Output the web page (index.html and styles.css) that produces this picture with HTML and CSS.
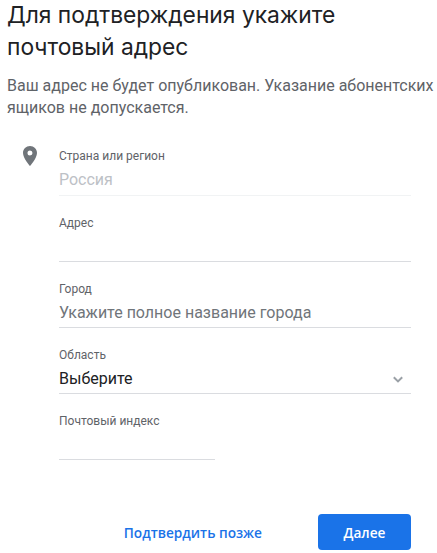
FILE: index.html
```html
<!DOCTYPE html>
<html lang="ru">

<head>
    <meta charset="UTF-8">
    <title>Подтверждение адреса</title>
    <link rel="stylesheet" href="styles.css">
</head>

<body>
    <h1 class="title"><span>Для подтверждения укажите</span> <span>почтовый адрес</span></h1>
    <p class="note">Ваш адрес не будет опубликован. Указание абонентских ящиков не допускается.</p>

    <div class="form">
        <svg class="pin" width="24" height="24" viewBox="0 0 24 24">
            <path fill="#70757a" fill-rule="evenodd" d="M12 2C8.13 2 5 5.13 5 9c0 5.25 7 13 7 13s7-7.75 7-13c0-3.87-3.13-7-7-7zm0 9.5a2.5 2.5 0 1 1 0-5 2.5 2.5 0 0 1 0 5z"/>
        </svg>

        <div class="fields">
            <div class="field field-disabled">
                <label>Страна или регион</label>
                <div class="value">Россия</div>
            </div>
            <div class="field">
                <label>Адрес</label>
                <div class="value"></div>
            </div>
            <div class="field">
                <label>Город</label>
                <div class="value placeholder">Укажите полное название города</div>
            </div>
            <div class="field">
                <label>Область</label>
                <div class="value select">
                    Выберите
                    <svg width="10" height="7" viewBox="0 0 10 7">
                        <path fill="none" stroke="#9aa0a6" stroke-width="2" d="M.8 1.2 5 5.4l4.2-4.2"/>
                    </svg>
                </div>
            </div>
            <div class="field field-short">
                <label>Почтовый индекс</label>
                <div class="value"></div>
            </div>
        </div>
    </div>

    <div class="actions">
        <button class="btn-later">Подтвердить позже</button>
        <button class="btn-next">Далее</button>
    </div>
</body>

</html>
```

FILE: styles.css
```css
* {
    margin: 0;
    padding: 0;
    box-sizing: border-box;
}

body {
    width: 437px;
    height: 553px;
    overflow: hidden;
    padding-left: 7px;
    background-color: #fff;
    font-family: Roboto, "Liberation Sans", sans-serif;
}

.title {
    display: flex;
    flex-direction: column;
    gap: 2px;
    font-family: Inter, sans-serif;
    font-size: 22.8px;
    font-weight: 400;
    line-height: 30px;
    color: #202124;
}

.note {
    margin-top: 13px;
    font-size: 16px;
    line-height: 22px;
    color: #5f6368;
}

.form {
    display: flex;
    width: 404px;
    margin-top: 25px;
}

.pin {
    flex: none;
    margin-left: 11px;
}

.fields {
    flex: 1;
    margin-left: 17px;
    padding-top: 4px;
}

.field {
    height: 66px;
    padding-top: 19px;
    border-bottom: 1px solid #dadce0;
}

.field label {
    display: block;
    font-size: 12px;
    line-height: 16px;
    color: #5f6368;
}

.value {
    height: 26px;
    margin-top: 3px;
    font-size: 16px;
    line-height: 26px;
    color: #202124;
}

.field-disabled {
    height: 48px;
    padding-top: 0;
    border-bottom-color: #f1f3f4;
}

.field-disabled .value {
    color: #bdc1c6;
}

.placeholder {
    color: #70757a;
}

.select {
    display: flex;
    align-items: center;
    justify-content: space-between;
    padding-right: 8px;
}

.field-short {
    width: 156px;
}

.actions {
    display: flex;
    justify-content: flex-end;
    align-items: center;
    gap: 56px;
    width: 404px;
    margin-top: 54px;
}

.actions button {
    border: none;
    font-family: "Open Sans", sans-serif;
    font-size: 13.7px;
    font-weight: 600;
    cursor: pointer;
}

.btn-later {
    background: none;
    color: #1a73e8;
}

.btn-next {
    width: 93px;
    height: 36px;
    border-radius: 4px;
    background-color: #1a73e8;
    color: #fff;
}
```
